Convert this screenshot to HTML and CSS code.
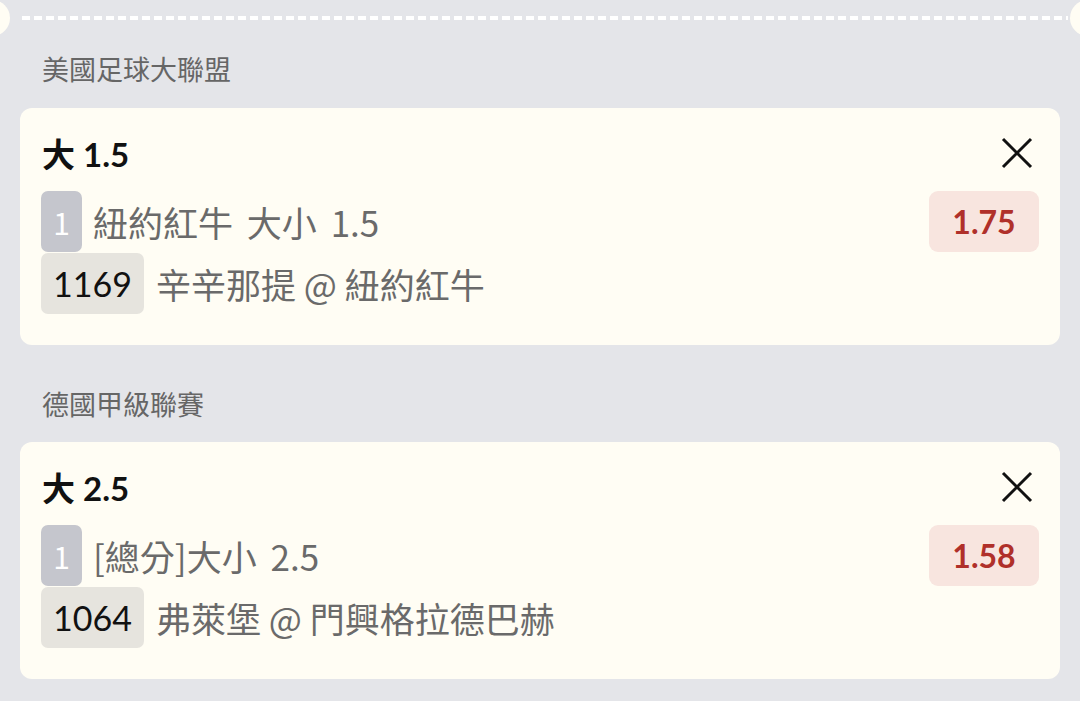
FILE: index.html
```html
<!DOCTYPE html>
<html lang="zh-Hant">
<head>
<meta charset="utf-8">
<link rel="stylesheet" href="styles.css">
</head>
<body>
<div class="page">
  <div class="tear">
    <span class="notch notch-left"></span>
    <span class="dashes"></span>
    <span class="notch notch-right"></span>
  </div>

  <div class="league league-first">美國足球大聯盟</div>
  <div class="card">
    <div class="card-head">
      <div class="pick">大 1.5</div>
      <svg class="close" viewBox="0 0 32 32" width="32" height="32"><path d="M2 2 L30 30 M30 2 L2 30" stroke="#111" stroke-width="3" fill="none"/></svg>
    </div>
    <div class="card-body">
      <div class="lines">
        <div class="line"><span class="count">1</span><span class="market">紐約紅牛 大小 1.5</span></div>
        <div class="line"><span class="code">1169</span><span class="match">辛辛那提 @ 紐約紅牛</span></div>
      </div>
      <div class="odds">1.75</div>
    </div>
  </div>

  <div class="league">德國甲級聯賽</div>
  <div class="card">
    <div class="card-head">
      <div class="pick">大 2.5</div>
      <svg class="close" viewBox="0 0 32 32" width="32" height="32"><path d="M2 2 L30 30 M30 2 L2 30" stroke="#111" stroke-width="3" fill="none"/></svg>
    </div>
    <div class="card-body">
      <div class="lines">
        <div class="line"><span class="count">1</span><span class="market">[總分]大小 2.5</span></div>
        <div class="line"><span class="code">1064</span><span class="match">弗萊堡 @ 門興格拉德巴赫</span></div>
      </div>
      <div class="odds">1.58</div>
    </div>
  </div>
</div>
</body>
</html>
```
FILE: styles.css
```css
html, body {
  margin: 0;
  padding: 0;
  background: #e4e5e9;
  overflow: hidden;
}
body {
  font-family: Lato, "Noto Sans CJK TC", sans-serif;
  width: 1080px;
  height: 701px;
}
.page {
  padding: 0 20px;
}
.tear {
  display: flex;
  align-items: center;
  height: 36px;
  margin: 0 -20px;
}
.notch {
  width: 36px;
  height: 36px;
  border-radius: 50%;
  background: #fffdf4;
  flex-shrink: 0;
}
.notch-left { margin-left: -26px; }
.notch-right { margin-right: -26px; }
.dashes {
  flex: 1;
  height: 4px;
  margin: 0 2px 0 12px;
  background-image: repeating-linear-gradient(to right, #ffffff 0 8px, transparent 8px 12px);
}
.league {
  font-family: "Noto Sans CJK TC", sans-serif;
  font-size: 27px;
  line-height: 34px;
  color: #666666;
  padding: 42px 0 21px 22px;
}
.league-first {
  padding-top: 16px;
  padding-bottom: 22px;
}
.card {
  background: #fffdf4;
  border-radius: 12px;
  padding: 25px 21px 31px 21px;
}
.card-head {
  display: flex;
  justify-content: space-between;
  align-items: center;
  height: 40px;
  margin-bottom: 18px;
}
.pick {
  font-size: 33px;
  font-weight: 700;
  color: #111;
  padding-left: 1px;
}
.close {
  margin-right: 6px;
}
.card-body {
  display: flex;
  justify-content: space-between;
  align-items: flex-start;
}
.lines {
  display: flex;
  flex-direction: column;
  gap: 1px;
}
.line {
  display: flex;
  align-items: center;
  gap: 12px;
  height: 61px;
}
.count {
  width: 41px;
  height: 61px;
  border-radius: 7px;
  background: #c5c6cd;
  color: #ffffff;
  font-family: "Noto Sans CJK TC", sans-serif;
  font-size: 30px;
  display: flex;
  align-items: center;
  justify-content: center;
}
.market, .match {
  font-family: "Noto Sans CJK TC", sans-serif;
  font-size: 35px;
  color: #6a6a6a;
}
.market {
  margin-left: -1px;
  word-spacing: 6px;
}
.code {
  height: 61px;
  padding: 0 12px;
  border-radius: 7px;
  background: #e6e4de;
  color: #111;
  font-size: 34px;
  display: flex;
  align-items: center;
}
.odds {
  width: 110px;
  height: 61px;
  border-radius: 9px;
  background: #f8e5df;
  color: #b0302a;
  font-size: 32px;
  font-weight: 700;
  display: flex;
  align-items: center;
  justify-content: center;
}
```
